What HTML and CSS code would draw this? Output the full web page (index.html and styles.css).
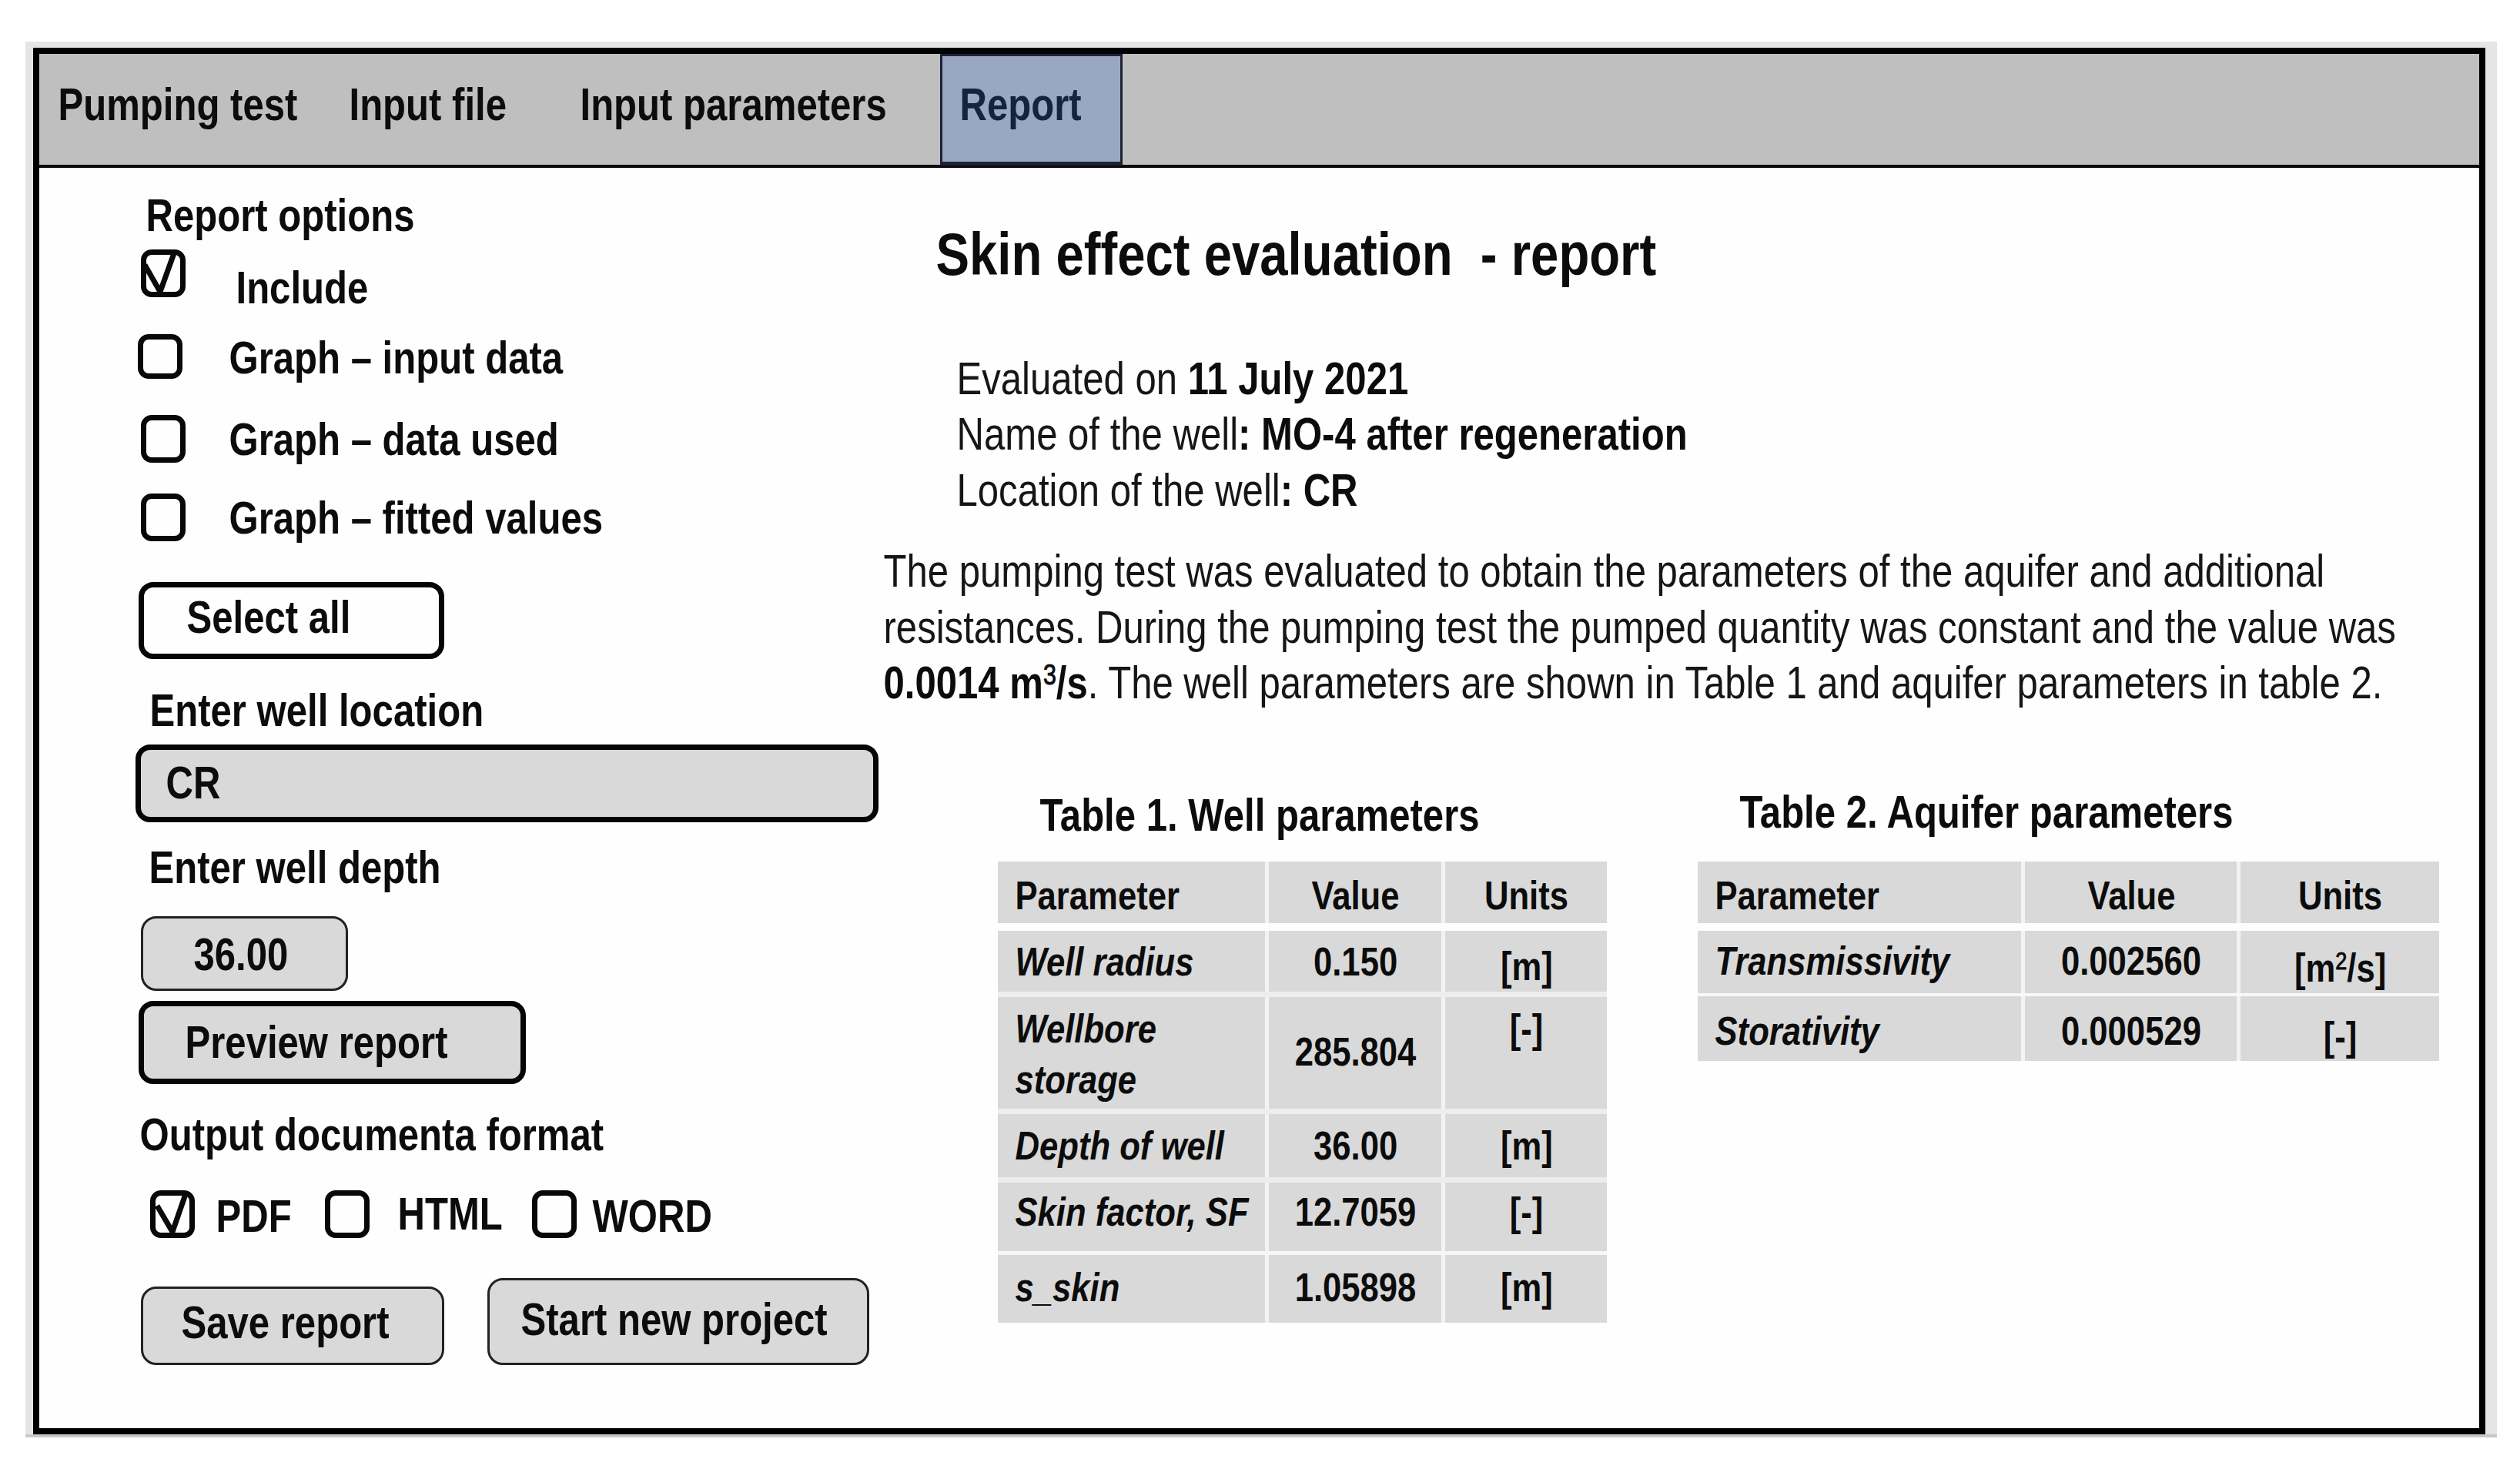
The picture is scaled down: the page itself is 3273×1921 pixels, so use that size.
FILE: index.html
```html
<!DOCTYPE html>
<html lang="en">
<head>
<meta charset="utf-8">
<title>Skin effect evaluation - report</title>
<link rel="stylesheet" href="styles.css">
</head>
<body>
<div class="backdrop">
<div class="window">
  <nav class="tabs">
    <a class="tab tab-pumping"><span class="t">Pumping test</span></a>
    <a class="tab tab-file"><span class="t">Input file</span></a>
    <a class="tab tab-params"><span class="t">Input parameters</span></a>
    <a class="tab tab-report"><span class="t">Report</span></a>
  </nav>
  <main class="content">
    <section class="options">
      <h2 class="label options-title"><span class="t">Report options</span></h2>
      <div class="option option-include">
        <span class="check"><svg class="tick" viewBox="0 0 58 62"><path d="M5 20L25 55L43 5"/></svg></span>
        <span class="t">Include</span>
      </div>
      <div class="option option-input"><span class="check"></span><span class="t">Graph – input data</span></div>
      <div class="option option-used"><span class="check"></span><span class="t">Graph – data used</span></div>
      <div class="option option-fitted"><span class="check"></span><span class="t">Graph – fitted values</span></div>
      <button class="box select-all"><span class="t">Select all</span></button>
      <div class="label location-label"><span class="t">Enter well location</span></div>
      <div class="box location"><span class="t">CR</span></div>
      <div class="label depth-label"><span class="t">Enter well depth</span></div>
      <div class="box thin depth"><span class="t">36.00</span></div>
      <button class="box preview"><span class="t">Preview report</span></button>
      <div class="label format-label"><span class="t">Output documenta format</span></div>
      <div class="formats">
        <div class="format pdf">
          <span class="check"><svg class="tick" viewBox="0 0 58 62"><path d="M9 20L29 54L46 5"/></svg></span>
          <span class="t">PDF</span>
        </div>
        <div class="format html"><span class="check"></span><span class="t">HTML</span></div>
        <div class="format word"><span class="check"></span><span class="t">WORD</span></div>
      </div>
      <div class="actions">
        <button class="box thin save"><span class="t">Save report</span></button>
        <button class="box thin start"><span class="t">Start new project</span></button>
      </div>
    </section>
    <section class="report">
      <h1 class="title"><span class="t">Skin effect evaluation&nbsp; - report</span></h1>
      <div class="meta">
        <div><span class="t">Evaluated on <b>11 July 2021</b></span></div>
        <div><span class="t">Name of the well<b>: MO-4 after regeneration</b></span></div>
        <div><span class="t">Location of the well<b>: CR</b></span></div>
      </div>
      <p class="summary"><span class="t">The pumping test was evaluated to obtain the parameters of the aquifer and additional<br>resistances. During the pumping test the pumped quantity was constant and the value was<br><b>0.0014 m<sup>3</sup>/s</b>. The well parameters are shown in Table 1 and aquifer parameters in table 2.</span></p>
      <div class="tables">
        <div class="table-block well">
          <div class="label caption"><span class="t">Table 1. Well parameters</span></div>
          <div class="grid">
            <div class="row head"><div><span class="t">Parameter</span></div><div><span class="t">Value</span></div><div><span class="t">Units</span></div></div>
            <div class="row radius"><div><span class="t">Well radius</span></div><div><span class="t">0.150</span></div><div><span class="t">[m]</span></div></div>
            <div class="row storage"><div><span class="t">Wellbore<br>storage</span></div><div><span class="t">285.804</span></div><div><span class="t">[-]</span></div></div>
            <div class="row well-depth"><div><span class="t">Depth of well</span></div><div><span class="t">36.00</span></div><div><span class="t">[m]</span></div></div>
            <div class="row skin-factor"><div><span class="t">Skin factor, SF</span></div><div><span class="t">12.7059</span></div><div><span class="t">[-]</span></div></div>
            <div class="row s-skin"><div><span class="t">s_skin</span></div><div><span class="t">1.05898</span></div><div><span class="t">[m]</span></div></div>
          </div>
        </div>
        <div class="table-block aquifer">
          <div class="label caption"><span class="t">Table 2. Aquifer parameters</span></div>
          <div class="grid">
            <div class="row head"><div><span class="t">Parameter</span></div><div><span class="t">Value</span></div><div><span class="t">Units</span></div></div>
            <div class="row transmissivity"><div><span class="t">Transmissivity</span></div><div><span class="t">0.002560</span></div><div><span class="t">[m<sup>2</sup>/s]</span></div></div>
            <div class="row storativity"><div><span class="t">Storativity</span></div><div><span class="t">0.000529</span></div><div><span class="t">[-]</span></div></div>
          </div>
        </div>
      </div>
    </section>
  </main>
</div>
</div>
</body>
</html>
```
FILE: styles.css
```css
* { box-sizing: border-box; }

body {
  margin: 0;
  background: #fff;
  color: #0c0c0c;
  font: bold 58.5px/60px "Liberation Sans", Arial, sans-serif;
  white-space: nowrap;
}

h1, h2, p { margin: 0; font: inherit; }

/* condensed lettering used throughout */
.t {
  display: inline-block;
  vertical-align: top;
  transform: translate(.5px, .5px) scaleX(.839);
  transform-origin: 0 50%;
}

sup {
  font-size: .62em;
  font-weight: normal;
  line-height: 0;
  vertical-align: baseline;
  position: relative;
  top: -.5em;
  -webkit-text-stroke: 1px currentColor;
}

.backdrop {
  width: 3210px;
  height: 1813px;
  margin: 54px 0 0 33px;
  padding: 8px 15px 0 10px;
  background: #e5e5e5;
  border-bottom: 4px solid #c8c8c8;
}

.window {
  height: 1801px;
  border: 8px solid #000;
  background: #fefefe;
}

/* tabs */
.tabs {
  display: flex;
  height: 148px;
  background: #bfbfbf;
  border-bottom: 4px solid #0a0a0a;
}
.tab { padding-top: 35px; height: 145px; flex: none; }
.tab-pumping { width: 402px; padding-left: 24px; }
.tab-file { width: 300px; }
.tab-params { width: 468px; }
.tab-report {
  width: 237px;
  padding: 32px 0 0 22px;
  background: #99a7c3;
  border: 3px solid #1b2233;
  border-bottom-width: 5px;
  color: #16233f;
}

.content { display: grid; grid-template-columns: 1096px minmax(0, 1fr); }

/* left panel */
.options { display: flex; flex-direction: column; align-items: flex-start; }
.label { height: 60px; }
.options-title { margin: 31px 0 0 138px; }
.location-label { margin: 36px 0 0 143px; }
.depth-label { margin: 28px 0 0 142px; }
.format-label { margin: 35px 0 0 130px; }

.check {
  flex: none;
  width: 58px;
  height: 62px;
  border: 7.5px solid #080808;
  border-radius: 14px;
}
.tick {
  display: block;
  width: 58px;
  height: 62px;
  margin: -7px;
  fill: none;
  stroke: #0a0a0a;
  stroke-width: 7;
}

.option { display: flex; height: 62px; margin-left: 132px; gap: 56px; }
.option .t { margin-top: 1px; }
.option-include { margin-top: 15px; gap: 65px; }
.option-include .t { margin-top: 19px; }
.option-input { margin-top: 48px; margin-left: 128px; gap: 60px; height: 58px; }
.option-input .check { height: 58px; }
.option-input .t { margin-top: 0; }
.option-used { margin-top: 47px; }
.option-fitted { margin-top: 40px; }

.box {
  display: block;
  margin: 0;
  padding: 0;
  font: inherit;
  color: inherit;
  text-align: left;
  background: #d9d9d9;
  border: 7px solid #050505;
  border-radius: 19px;
}
button.box { display: flex; align-items: flex-start; }
.box.thin { border: 3px solid #222; border-radius: 20px; }
.select-all { width: 397px; height: 100px; margin: 53px 0 0 129px; padding: 8px 0 0 55px; background: #fefefe; }
.location { width: 965px; height: 101px; margin: 15px 0 0 125px; padding: 12px 0 0 32px; }
.box.depth { width: 269px; height: 97px; margin: 34px 0 0 132px; padding: 16px 0 0 65px; }
.preview { width: 503px; height: 108px; margin: 13px 0 0 129px; padding: 16px 0 0 53px; }

.formats { display: flex; margin: 43px 0 0 144px; height: 62px; }
.format { display: flex; flex: none; }
.format .t { margin-top: 3px; }
.pdf { width: 227px; gap: 27px; }
.html { width: 269px; gap: 36px; }
.html .t { margin-top: 0; }
.word { gap: 20px; }

.actions { display: flex; align-items: flex-end; gap: 56px; margin: 52px 0 0 132px; }
.save { width: 394px; height: 102px; padding: 13px 0 0 49px; }
.start { width: 496px; height: 113px; padding: 20px 0 0 40px; }

/* report */
.title { margin: 71px 0 0 68px; font-size: 77.8px; line-height: 80px; }
.meta { margin: 86px 0 0 95px; font-weight: normal; line-height: 72px; color: #161616; }
.meta div { height: 72px; }
.meta div:last-child { padding-top: 1px; }
.summary { margin-top: 34px; height: 218px; overflow: hidden; font-weight: normal; line-height: 72.5px; color: #161616; }
.meta b, .summary b { color: #0c0c0c; }

.tables { display: flex; align-items: flex-start; margin: 100px 0 0 149px; }
.well { width: 909px; }
.well .caption { margin: 5px 0 0 54px; height: 91px; }
.aquifer .caption { margin: 1px 0 0 54px; height: 95px; }
.grid { font-size: 52px; }
.row {
  display: grid;
  column-gap: 5px;
  width: max-content;
  background: #f3f3f3;
  border-bottom: 7px solid #ededed;
}
.row:last-child { border-bottom: 0; }
.well .row { grid-template-columns: 347px 224px 210px; }
.aquifer .row { grid-template-columns: 420px 275px 258px; }
.row > div { background: #d9d9d9; text-align: center; min-width: 0; }
.row > div:first-child { text-align: left; padding-left: 22px; font-style: italic; }
.row.head > div:first-child { font-style: normal; }
.row > div:not(:first-child) .t { transform-origin: 50% 50%; }

.row.head { border-bottom: 10px solid #fdfdfd; height: 90px; }
.head > div { padding-top: 13px; }

.radius { height: 86px; }
.radius > div { padding-top: 9px; }
.radius > div:last-child { padding-top: 15px; }
.storage { height: 152px; }
.storage > div { padding-top: 10px; }
.storage > div:first-child { line-height: 66px; padding-top: 7px; }
.storage > div:nth-child(2) { padding-top: 40px; }
.well-depth { height: 89px; }
.well-depth > div { padding-top: 10px; }
.skin-factor { height: 94px; border-bottom: 5px solid #f6f6f6; }
.skin-factor > div { padding-top: 7px; }
.s-skin { height: 88px; }
.s-skin > div { padding-top: 11px; }

.row.transmissivity { height: 85px; border-bottom: 4px solid #f8f8f8; }
.transmissivity > div { padding-top: 8px; }
.transmissivity > div:last-child { padding-top: 17px; }
.storativity { height: 84px; }
.storativity > div { padding-top: 14px; }
.storativity > div:last-child { padding-top: 21px; }
```
